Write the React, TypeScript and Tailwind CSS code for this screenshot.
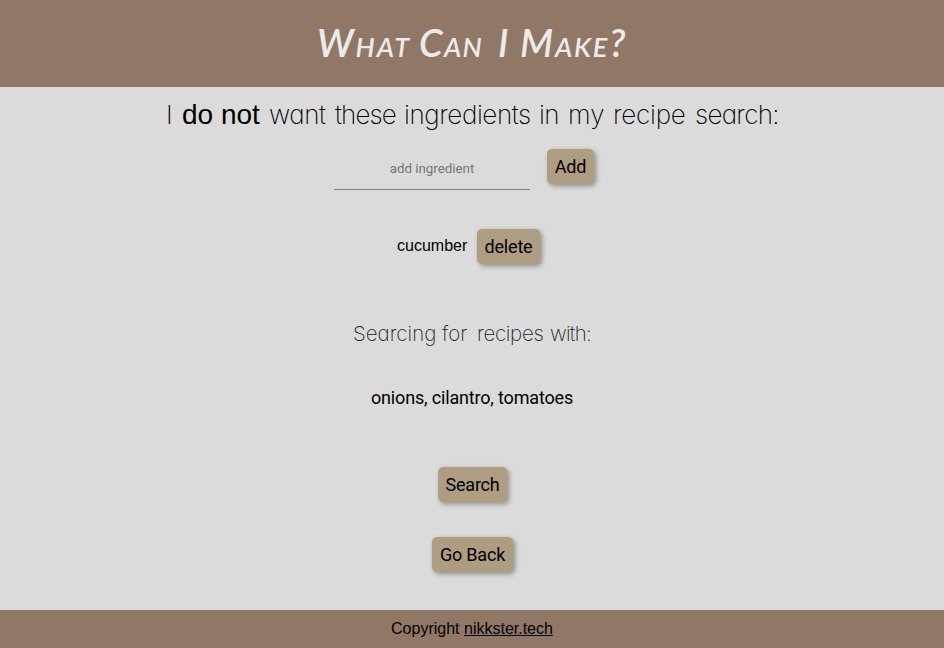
import React from "react";

const button =
  "h-[35px] shrink-0 whitespace-nowrap rounded-[5px] bg-[#af9d82] text-center font-['Roboto',sans-serif] text-[18px] leading-[35px] tracking-[-0.2px] text-black shadow-[2px_2px_5px_#8b8b8b]";

export default function App() {
  return (
    <div className="flex h-[648px] w-[944px] flex-col overflow-hidden bg-[#dbdbdb] font-['Liberation_Sans',sans-serif] text-black">
      <header className="h-[87px] shrink-0 bg-[#917866]">
        <h1 className="flex h-[84px] items-center whitespace-nowrap pl-[317px] font-['Lato',sans-serif] text-[38px] font-semibold italic leading-none text-[#ebebeb] [font-variant-caps:small-caps]">
          <span className="w-[102px] tracking-[2px]">What</span>
          <span className="w-[79px] tracking-[1.3px]">Can</span>
          <span className="w-[22px]">I</span>
          <span className="tracking-[1.8px]">Make?</span>
        </h1>
      </header>
      <main className="flex h-[523px] shrink-0 flex-col">
        <h2 className="mt-[10px] flex h-9 items-center whitespace-nowrap pl-[166px] font-['Inter',sans-serif] text-[26px] font-[150] leading-9 [font-feature-settings:'cv11']">
          <span className="w-[16px]">I</span>
          <span className="w-[87px] font-['Liberation_Sans',sans-serif] text-[28px] font-normal">do not</span>
          <span className="w-[66px] tracking-[-0.4px]">want</span>
          <span className="w-[69px] tracking-[-0.9px]">these</span>
          <span className="w-[135px] tracking-[-0.4px]">ingredients</span>
          <span className="w-[29px] tracking-[-0.5px]">in</span>
          <span className="w-[45px]">my</span>
          <span className="w-[82px] tracking-[-0.2px]">recipe</span>
          <span className="tracking-[-0.7px]">search:</span>
        </h2>
        <form className="mt-4 flex h-[41px] items-start pl-[334px]" onSubmit={(e) => e.preventDefault()}>
          <input
            placeholder="add ingredient"
            className="mr-[17px] h-[41px] w-[196px] border-b border-[#917866] bg-transparent pb-[2px] text-center font-['Roboto',sans-serif] text-[13.33px] outline-none placeholder:text-[#757575]"
          />
          <button className={button + " w-[47px]"}>Add</button>
        </form>
        <div className="mt-[39px] flex h-[35px] pl-[397px]">
          <span className="w-20 text-[16px] leading-[33px]">cucumber</span>
          <button className={button + " w-[63px]"}>delete</button>
        </div>
        <h3 className="mt-[54px] flex h-8 items-center whitespace-nowrap pl-[353px] font-['Inter',sans-serif] text-[20.5px] font-[150] leading-8 text-[#222] [font-feature-settings:'cv11']">
          <span className="w-[89px]">Searcing</span>
          <span className="w-[35px]">for</span>
          <span className="w-[73px] tracking-[-0.3px]">recipes</span>
          <span className="tracking-[-0.7px]">with:</span>
        </h3>
        <p className="mt-[34px] h-7 text-center font-['Roboto',sans-serif] text-[18px] leading-7 tracking-[-0.17px]">onions, cilantro, tomatoes</p>
        <div className="mt-[55px] flex flex-col gap-[35px]">
          <button className={button + " ml-[438px] w-[69px]"}>Search</button>
          <button className={button + " ml-[432px] w-[81px]"}>Go Back</button>
        </div>
      </main>
      <footer className="h-[38px] shrink-0 bg-[#917866] text-center text-[16px] leading-[37px]">
        Copyright <a href="#" className="underline">nikkster.tech</a>
      </footer>
    </div>
  );
}
